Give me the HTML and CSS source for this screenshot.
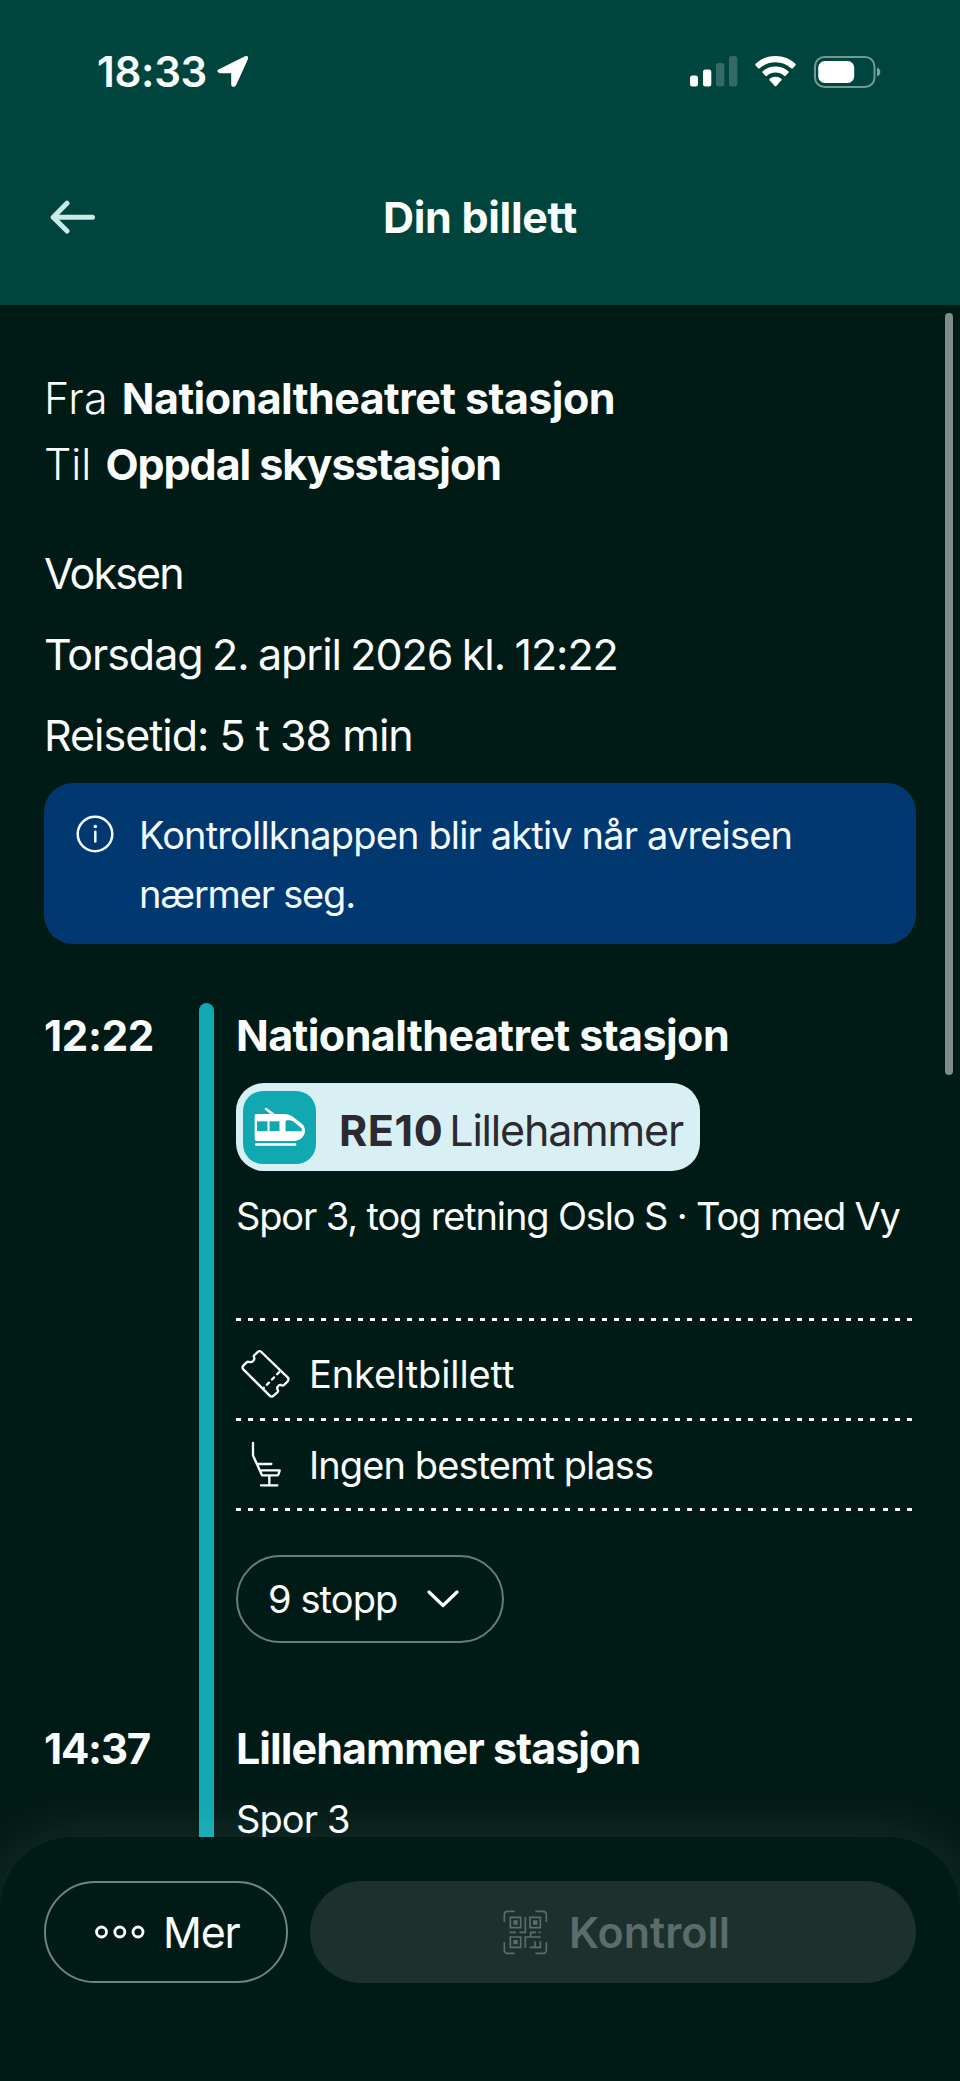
FILE: index.html
```html
<!DOCTYPE html>
<html lang="no">
<head>
<meta charset="utf-8">
<title>Din billett</title>
<link rel="stylesheet" href="styles.css">
</head>
<body>
<div class="screen">
  <header class="header">
    <div class="status">
      <div class="clock">
        <span class="clock-time">18:33</span>
        <svg class="location" width="32" height="33" viewBox="0 0 32 33"><path d="M2 14.200L28 1.200Q31.800 0 31 4L19.200 30Q17.500 32.800 15 31.400Q14.200 30.800 14.200 29.500V18.200H3Q.3 17.800 .3 15.800Q.4 14.900 2 14.200Z"/></svg>
      </div>
      <div class="indicators">
        <svg width="48" height="32" viewBox="0 0 48 32">
          <rect x="0" y="19.500" width="8" height="11" rx="2.500"/>
          <rect x="13" y="13.500" width="8.300" height="17" rx="2.500"/>
          <g opacity=".2"><rect x="26" y="7" width="8.300" height="23.500" rx="2.500"/><rect x="39" y="0" width="8.300" height="30.500" rx="2.500"/></g>
        </svg>
        <svg class="wifi" width="41" height="32" viewBox="0 0 41 32">
          <path d="M20.500 0C12.500 0 5.600 3 .6 7.800Q-.1 8.600 .6 9.400L3.200 12.200Q4 13 4.900 12.200C9 8.500 14.500 6.300 20.500 6.300S32 8.500 36.100 12.200Q37 13 37.800 12.200L40.400 9.400Q41.100 8.600 40.400 7.800C35.400 3 28.500 0 20.500 0Z"/>
          <path d="M20.500 10.400C15.400 10.400 11 12.300 7.700 15.200Q6.900 16 7.600 16.800L10.400 19.700Q11.200 20.400 12 19.700C14.300 17.800 17.200 16.600 20.500 16.600S26.700 17.800 29 19.700Q29.800 20.400 30.600 19.700L33.400 16.800Q34.100 16 33.300 15.200C30 12.300 25.600 10.400 20.500 10.400Z"/>
          <path d="M20.500 20.700C18.200 20.700 16.200 21.500 14.700 22.700Q13.900 23.400 14.600 24.200L19.700 29.900Q20.500 30.600 21.300 29.900L26.400 24.200Q27.100 23.400 26.300 22.700C24.800 21.500 22.800 20.700 20.500 20.700Z"/>
        </svg>
        <svg class="battery" width="67" height="32" viewBox="0 0 67 32">
          <rect class="battery-shell" x="1" y="1" width="59.500" height="30" rx="9.500"/>
          <path opacity=".5" d="M63 11.500Q66.300 12.500 66.300 16T63 20.500Z"/>
          <rect x="4.200" y="5" width="36" height="22" rx="6.500"/>
        </svg>
      </div>
    </div>
    <nav class="nav">
      <svg class="back" width="46" height="34" viewBox="0 0 46 34"><path d="M42.500 17.200H4M17 3.200L3.200 17.200L17 31"/></svg>
      <h1 class="title">Din billett</h1>
    </nav>
  </header>

  <main class="content">
    <section class="route">
      <div class="route-line"><span class="route-label fra">Fra</span><span class="strong">Nationaltheatret stasjon</span></div>
      <div class="route-line"><span class="route-label">Til</span><span class="strong oppdal">Oppdal skysstasjon</span></div>
    </section>
    <section class="facts">
      <div class="voksen">Voksen</div>
      <div class="date">Torsdag 2. april 2026 kl. 12:22</div>
      <div class="duration">Reisetid: 5 t 38 min</div>
    </section>

    <aside class="notice">
      <svg class="notice-icon" width="38" height="38" viewBox="0 0 38 38"><circle cx="19" cy="19" r="17.300"/><path d="M19.300 16.700V26.500"/><circle class="dot" cx="19.300" cy="11.500" r="1.800"/></svg>
      <p class="notice-text">Kontrollknappen blir aktiv når avreisen<br><span class="tight">nærmer seg.</span></p>
    </aside>

    <section class="journey">
      <div class="rail"></div>
      <time class="time">12:22</time>
      <div class="stop">
        <div class="place">Nationaltheatret stasjon</div>
        <div class="pill">
          <div class="mode">
            <svg width="52" height="40" viewBox="19 22 52 40">
              <path class="stroke" d="M31 24L39 30"/>
              <path d="M21 29H50Q54 29 57.500 31.500L66.500 38.500Q70.500 42 70 47Q68.500 54.500 60 56H21.500Q19.700 56 19.700 54V31Q19.700 29 21 29Z"/>
              <rect x="20" y="58.300" width="41.300" height="2.500" rx="1"/>
              <g class="window"><rect x="22" y="36.300" width="10.500" height="9.800"/><rect x="34.500" y="36.300" width="10" height="9.800"/><path d="M50.500 46.200V37Q50.500 35.200 52 35.200H55Q57 35.400 58.500 36.600L66.800 43.600V46.200Z"/></g>
            </svg>
          </div>
          <span class="line-code">RE10</span><span class="line-name">Lillehammer</span>
        </div>
        <div class="platform long">Spor 3, tog retning Oslo S · Tog med Vy</div>
        <ul class="details">
          <li class="detail first">
            <svg class="icon" width="53" height="53" viewBox="57 143 159 159"><path d="M112 159Q118 152 124 158L203 234Q208 240 203 246L192 257Q188 260 183 257Q177 256 173 262Q170 267 174 273Q175 277 172 279L161 289Q155 295 149 289L70 210Q65 204 70 199L79 190Q83 186 88 188Q95 190 100 184Q105 178 102 174Q100 170 104 167Z"/><path class="perforation" d="M179 217L131 266"/></svg>
            <span class="enkelt">Enkeltbillett</span>
          </li>
          <li class="detail">
            <svg class="icon" width="53" height="53" viewBox="57 415 159 159"><path d="M99 430V465Q99 468 100 470L126 527H171Q175 527 176 523L179 512H119M114 493H154M148 527V556M123 557H172"/></svg>
            <span class="ingen">Ingen bestemt plass</span>
          </li>
        </ul>
        <button class="stops"><span>9 stopp</span><svg width="32" height="18" viewBox="0 0 32 18"><path d="M2 2L16 15.500L30 2"/></svg></button>
      </div>
      <time class="time second">14:37</time>
      <div class="stop next">
        <div class="place lillehammer">Lillehammer stasjon</div>
        <div class="platform short">Spor 3</div>
      </div>
    </section>
    <div class="scrollbar"></div>
  </main>

  <footer class="actions">
    <button class="more">
      <svg width="50" height="14" viewBox="0 0 50 14"><circle cx="6.500" cy="7" r="5"/><circle cx="24.800" cy="7" r="5"/><circle cx="43" cy="7" r="5"/></svg>
      <span>Mer</span>
    </button>
    <button class="control">
      <svg width="45" height="45" viewBox="69 569 135 135">
        <path d="M73 605V583Q73 573 83 573H104M166 573H189Q199 573 199 583V605M199 666V689Q199 699 189 699H166M104 699H83Q73 699 73 689V666"/>
        <path d="M91 591H122V622H91ZM150 591H181V622H150ZM91 650H122V681H91ZM136 590V636H118M89 636H108M152 650V636H168M176 636H182M136 682V650H182M149 681H181V663M165 663V681"/>
        <path class="solid" d="M100 600H113V613H100ZM159 600H172V613H159ZM100 659H113V672H100Z"/>
      </svg>
      <span>Kontroll</span>
    </button>
  </footer>
</div>
</body>
</html>
```
FILE: styles.css
```css
* { box-sizing: border-box; }

body {
  margin: 0;
  background: #001a16;
  color: #fafdfc;
  font-family: Inter, "Liberation Sans", sans-serif;
  font-size: 43px;
}

button { font: inherit; color: inherit; background: none; border: 0; padding: 0; }
svg { display: block; flex: none; }

.screen { display: flex; flex-direction: column; width: 960px; height: 2081px; overflow: hidden; }

/* Header */
.header { flex: none; height: 305px; background: #00453d; }
.status { display: flex; justify-content: space-between; align-items: center; height: 143px; padding: 0 79px 0 97px; }
.status svg { fill: #fff; }
.clock { display: flex; align-items: center; gap: 10px; font-size: 42px; font-weight: 600; letter-spacing: -0.3px; }
.indicators { display: flex; align-items: center; }
.wifi { margin-left: 17px; }
.battery { margin-left: 18px; }
.battery .battery-shell { fill: none; stroke: #fff; stroke-opacity: 0.45; stroke-width: 2; }
.nav { display: grid; grid-template-columns: 46px 1fr 46px; align-items: center; height: 147px; padding: 0 50px; }
.back { fill: none; stroke: #c8ece5; stroke-width: 5; stroke-linecap: round; stroke-linejoin: round; }
.title { margin: 0; font-size: 43px; font-weight: 700; letter-spacing: -0.3px; line-height: 52px; text-align: center; }

/* Ticket summary */
.content { position: relative; flex: 1; min-height: 0; overflow: hidden; padding: 60px 44px 0; }
.route-line { display: flex; gap: 14px; line-height: 66px; }
.route-label { font-weight: 300; }
.fra { letter-spacing: 0.3px; }
.strong { font-weight: 700; letter-spacing: -0.57px; }
.oppdal { letter-spacing: -1.05px; }
.facts { margin-top: 36px; line-height: 81px; }
.voksen { letter-spacing: -1.9px; }
.date { letter-spacing: -1.05px; word-spacing: -1.6px; }
.duration { letter-spacing: -1px; }

.notice { display: flex; gap: 25px; height: 161px; margin-top: 7px; padding: 22px 32px; border-radius: 29px; background: #00386f; color: #f2f9ff; }
.notice-icon { margin-top: 10px; fill: none; stroke: #f2f9ff; stroke-width: 2.5; stroke-linecap: round; }
.notice-icon .dot { fill: #f2f9ff; stroke: none; }
.notice-text { margin: 0; padding-top: 1px; font-size: 38px; line-height: 59px; letter-spacing: -0.85px; white-space: nowrap; }
.tight { letter-spacing: -1.2px; }

/* Journey */
.journey { display: grid; grid-template-columns: 155px 15px 1fr; margin-top: 59px; }
.rail { grid-column: 2; grid-row: 1 / 3; border-radius: 8px 8px 0 0; background: #12a8b2; }
.time { grid-column: 1; grid-row: 1; font-size: 42px; font-weight: 700; line-height: 66px; letter-spacing: -0.3px; }
.second { grid-row: 2; letter-spacing: -1.2px; }
.stop { grid-column: 3; grid-row: 1; padding: 0 0 73px 22px; }
.next { grid-row: 2; padding-bottom: 40px; }
.place { font-weight: 700; line-height: 65px; letter-spacing: -0.57px; }
.lillehammer { letter-spacing: -0.95px; }
.pill { display: flex; align-items: center; width: 464px; height: 88px; margin-top: 15px; padding-left: 7px; border-radius: 28px; background: #d8f0f4; color: #2a2a30; white-space: nowrap; }
.mode { display: grid; place-items: center; width: 73px; height: 73px; margin-right: 23px; border-radius: 20px; background: #12a8b2; fill: #fff; }
.mode .stroke { fill: none; stroke: #fff; stroke-width: 2.4; stroke-linecap: round; }
.mode .window { fill: #12a8b2; }
.line-code { position: relative; top: 3px; font-weight: 700; letter-spacing: 0.6px; }
.line-name { position: relative; top: 3px; margin-left: 6px; letter-spacing: -1.2px; }
.platform { margin-top: 16px; font-size: 38px; line-height: 58px; white-space: nowrap; }
.long { letter-spacing: -1.15px; }
.short { margin-top: 9px; letter-spacing: -0.9px; }

.details { margin: 73px 0 0; padding: 0; list-style: none; font-size: 38px; }
.details::before, .detail::after {
  content: "";
  display: block;
  height: 3px;
  width: 678px;
  background: repeating-linear-gradient(90deg, #fafdfc 0 5px, transparent 5px 12.2px);
}
.detail { display: grid; grid-template-columns: 53px 1fr; column-gap: 17px; align-items: center; padding-left: 3px; height: 90px; grid-template-rows: 87px 3px; }
.detail::after { margin-left: -3px; grid-column: 1 / 3; }
.detail.first { height: 100px; grid-template-rows: 97px 3px; }
.first > svg, .first > span { position: relative; top: 4px; }
.icon { fill: none; stroke: #fafdfc; stroke-width: 7; stroke-linejoin: round; stroke-linecap: round; }
.icon .perforation { stroke-dasharray: 9 13; stroke-dashoffset: -2; }
.ingen { letter-spacing: -0.9px; }
.enkelt { letter-spacing: -0.1px; }

.stops { display: flex; align-items: center; justify-content: space-between; width: 268px; height: 88px; margin-top: 44px; padding: 0 43px 0 30px; border: 2.4px solid #6b7b78; border-radius: 44px; font-size: 38px; letter-spacing: -0.9px; }
.stops svg { fill: none; stroke: #fafdfc; stroke-width: 3.2; stroke-linecap: round; stroke-linejoin: round; }

.scrollbar { position: absolute; top: 8px; right: 7px; width: 8px; height: 762px; border-radius: 4px; background: #808c8a; }

/* Bottom actions */
.actions { position: relative; flex: none; display: flex; gap: 22px; height: 244px; padding: 44px 44px 0; border-radius: 72px 72px 0 0; background: #001a16; box-shadow: 0 0 60px rgba(255, 255, 255, 0.11); }
.more { display: flex; align-items: center; width: 244px; height: 102px; padding-left: 49px; gap: 18px; border: 2.3px solid #72827f; border-radius: 51px; letter-spacing: -1.2px; }
.more svg { fill: none; stroke: #fafdfc; stroke-width: 2.8; }
.control { display: flex; align-items: center; flex: 1; height: 102px; padding-left: 193px; gap: 21px; border-radius: 51px; background: #1c302d; color: #5b6c6a; font-weight: 600; }
.control svg { fill: none; stroke: #5b6c6a; stroke-width: 5; stroke-linecap: butt; }
.control .solid { fill: #5b6c6a; stroke: none; }
```
